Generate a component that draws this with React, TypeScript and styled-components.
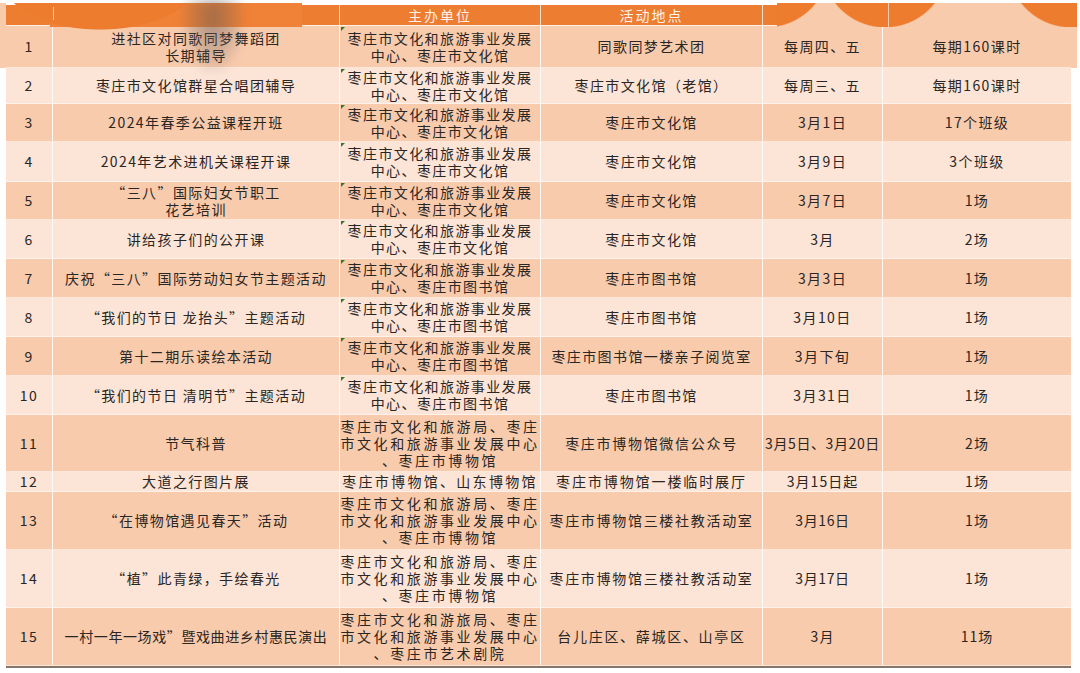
import React from 'react';
import styled, { createGlobalStyle } from 'styled-components';

const GlobalStyle = createGlobalStyle`
  *, *::before, *::after { box-sizing: border-box; }
  html, body { margin: 0; padding: 0; background: #fff; }
  body { font-family: "Noto Sans CJK SC", "Noto Sans", sans-serif; }
`;

const ORANGE = '#ED7D31';
const DARK = '#F8CBAD';
const LIGHT = '#FCE4D6';
const COLS = '47px 287px 201px 222px 120px 188px';

const Page = styled.div`
  position: relative;
  width: 1080px;
  height: 673px;
  overflow: hidden;
  background: #fff;
  padding: 5px 0 0 6px;
`;

const Table = styled.div`
  width: 1065px;
  display: flex;
  flex-direction: column;
  border-bottom: 2px solid #86756b;
`;

const HeaderRow = styled.div`
  display: grid;
  grid-template-columns: ${COLS};
  height: 21px;
  background: ${ORANGE};
  border-bottom: 1px solid #fdeee4;
`;

const HeaderCell = styled.div`
  display: flex;
  align-items: center;
  justify-content: center;
  color: #fdf1e8;
  font-size: 14px;
  letter-spacing: 2px;
  line-height: 20px;
  border-right: 1px solid rgba(255, 255, 255, 0.75);
  &:last-child { border-right: none; }
`;

const Row = styled.div<{ $h: number; $dark: boolean }>`
  display: grid;
  grid-template-columns: ${COLS};
  height: ${(p) => p.$h}px;
  background: ${(p) => (p.$dark ? DARK : LIGHT)};
  border-bottom: 1px solid rgba(255, 255, 255, 0.55);
`;

const Cell = styled.div<{ $ls?: number; $mark?: boolean }>`
  position: relative;
  display: flex;
  flex-direction: column;
  align-items: center;
  justify-content: center;
  text-align: center;
  font-size: 14px;
  line-height: 17px;
  color: #2a2624;
  white-space: nowrap;
  letter-spacing: ${(p) => (p.$ls ?? 1.4)}px;
  border-right: 1px solid rgba(255, 255, 255, 0.85);
  &:last-child { border-right: none; }
  &::before {
    content: '';
    display: ${(p) => (p.$mark ? 'block' : 'none')};
    position: absolute;
    left: 1px;
    top: 1px;
    width: 0;
    height: 0;
    border-top: 4px solid #2f7a2a;
    border-right: 4px solid transparent;
  }
`;

const Line = styled.span`
  display: block;
`;

/* scraps of a decorative banner pasted over the top of the sheet */
const LeftDeco = styled.div`
  position: absolute;
  left: 0;
  top: 3px;
  width: 302px;
  height: 65px;
  pointer-events: none;
  background:
    linear-gradient(rgba(255, 255, 255, 0.6), rgba(255, 255, 255, 0.6)) 53px 4px / 1px 13px no-repeat,
    radial-gradient(ellipse 95px 45px at 100px -18px, #ee7c2f 98%, transparent 100%) 0 0 / 302px 65px no-repeat,
    linear-gradient(#ef8236, #ef8236) 50px 0 / 252px 24px no-repeat,
    linear-gradient(${DARK}, ${DARK}) 0 0 / 6px 65px no-repeat;

  &::after {
    content: '';
    position: absolute;
    left: 182px;
    top: -4px;
    width: 62px;
    height: 74px;
    background: radial-gradient(ellipse at 50% 25%, rgba(105, 92, 88, 0.55), rgba(105, 92, 88, 0.18) 55%, transparent 75%);
    filter: blur(4px);
  }
`;

const RightDeco = styled.div`
  position: absolute;
  left: 777px;
  top: 3px;
  width: 300px;
  height: 24px;
  pointer-events: none;
  background:
    linear-gradient(rgba(255, 255, 255, 0.6), rgba(255, 255, 255, 0.6)) 111px 0 / 1px 24px no-repeat,
    radial-gradient(circle 64px at -11px -39px, #ee7c2f 98%, transparent 100%),
    radial-gradient(circle 64px at 108px -39px, #ee7c2f 98%, transparent 100%),
    radial-gradient(circle 64px at 294px -39px, #ee7c2f 98%, transparent 100%),
    ${DARK};

  &::after {
    content: '';
    position: absolute;
    right: 0;
    top: 24px;
    width: 6px;
    height: 41px;
    background: ${DARK};
  }
`;

type RowData = {
  h: number;
  cells: (string | string[])[];
  ls?: (number | undefined)[];
  mark?: boolean;
};

const WH = ['枣庄市文化和旅游事业发展', '中心、枣庄市文化馆'];
const TS = ['枣庄市文化和旅游事业发展', '中心、枣庄市图书馆'];
const BW = ['枣庄市文化和旅游局、枣庄', '市文化和旅游事业发展中心', '、枣庄市博物馆'];
const L = [undefined, undefined, 2.6, 1.7, 0.6, 1];

const rows: RowData[] = [
  { h: 42, mark: true, cells: ['1', ['进社区对同歌同梦舞蹈团', '长期辅导'], WH, '同歌同梦艺术团', '每周四、五', '每期160课时'] },
  { h: 36, mark: true, cells: ['2', '枣庄市文化馆群星合唱团辅导', WH, '枣庄市文化馆（老馆）', '每周三、五', '每期160课时'] },
  { h: 38, mark: true, cells: ['3', '2024年春季公益课程开班', WH, '枣庄市文化馆', '3月1日', '17个班级'] },
  { h: 40, mark: true, cells: ['4', '2024年艺术进机关课程开课', WH, '枣庄市文化馆', '3月9日', '3个班级'] },
  { h: 38, mark: true, cells: ['5', ['“三八”国际妇女节职工', '花艺培训'], WH, '枣庄市文化馆', '3月7日', '1场'] },
  { h: 39, mark: true, cells: ['6', '讲给孩子们的公开课', WH, '枣庄市文化馆', '3月', '2场'] },
  { h: 39, mark: true, cells: ['7', '庆祝“三八”国际劳动妇女节主题活动', TS, '枣庄市图书馆', '3月3日', '1场'] },
  { h: 39, mark: true, cells: ['8', '“我们的节日 龙抬头”主题活动', TS, '枣庄市图书馆', '3月10日', '1场'] },
  { h: 39, mark: true, cells: ['9', '第十二期乐读绘本活动', TS, '枣庄市图书馆一楼亲子阅览室', '3月下旬', '1场'] },
  { h: 39, mark: true, cells: ['10', '“我们的节日 清明节”主题活动', TS, '枣庄市图书馆', '3月31日', '1场'] },
  { h: 57, ls: L, cells: ['11', '节气科普', BW, '枣庄市博物馆微信公众号', '3月5日、3月20日', '2场'] },
  { h: 20, ls: [undefined, undefined, 2.3, 1.9, 1, 1], cells: ['12', '大道之行图片展', '枣庄市博物馆、山东博物馆', '枣庄市博物馆一楼临时展厅', '3月15日起', '1场'] },
  { h: 58, ls: L, cells: ['13', '“在博物馆遇见春天”活动', BW, '枣庄市博物馆三楼社教活动室', '3月16日', '1场'] },
  { h: 58, ls: L, cells: ['14', '“植”此青绿，手绘春光', BW, '枣庄市博物馆三楼社教活动室', '3月17日', '1场'] },
  {
    h: 58,
    ls: [undefined, 0.6, 2.6, 1.7, 1, 1],
    cells: ['15', '一村一年一场戏”暨戏曲进乡村惠民演出', ['枣庄市文化和游旅局、枣庄', '市文化和旅游事业发展中心', '、枣庄市艺术剧院'], '台儿庄区、薛城区、山亭区', '3月', '11场'],
  },
];

const headers = ['', '', '主办单位', '活动地点', '', ''];

export default function App() {
  return (
    <>
      <GlobalStyle />
      <Page>
        <Table>
          <HeaderRow>
            {headers.map((t, i) => (
              <HeaderCell key={i}>{t}</HeaderCell>
            ))}
          </HeaderRow>
          {rows.map((r, ri) => (
            <Row key={ri} $h={r.h} $dark={ri % 2 === 0}>
              {r.cells.map((c, ci) => (
                <Cell key={ci} $ls={r.ls?.[ci]} $mark={r.mark && ci === 2}>
                  {Array.isArray(c) ? c.map((line, li) => <Line key={li}>{line}</Line>) : c}
                </Cell>
              ))}
            </Row>
          ))}
        </Table>

        <LeftDeco />
        <RightDeco />
      </Page>
    </>
  );
}
